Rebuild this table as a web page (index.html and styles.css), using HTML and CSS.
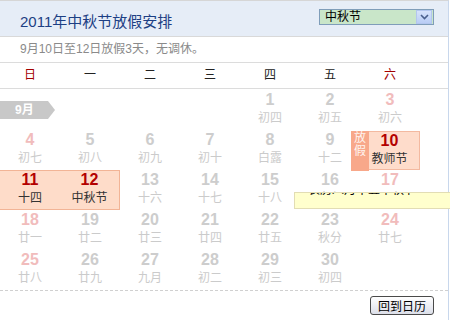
FILE: index.html
```html
<!DOCTYPE html>
<html lang="zh-CN">
<head>
<meta charset="utf-8">
<title>2011年中秋节放假安排</title>
<link rel="stylesheet" href="styles.css">
</head>
<body>
<div class="cal">
  <div class="hd">
    <h1 class="title">2011年中秋节放假安排</h1>
    <div class="select">
      <span class="sel-text">中秋节</span>
      <span class="sel-btn"><svg width="9" height="6" viewBox="0 0 9 6"><path d="M1 1 L4.5 4.5 L8 1" fill="none" stroke="#4a5f8c" stroke-width="1.6"/></svg></span>
    </div>
  </div>
  <div class="sub">9月10日至12日放假3天，无调休。</div>
  <div class="week">
    <span class="wk red">日</span><span class="wk">一</span><span class="wk">二</span><span class="wk">三</span><span class="wk">四</span><span class="wk">五</span><span class="wk red">六</span>
  </div>
  <div class="days">
    <div class="month-cell"><span class="month-tag">9月</span></div>
    <div class="cell"><span class="n">1</span><span class="l">初四</span></div>
    <div class="cell"><span class="n">2</span><span class="l">初五</span></div>
    <div class="cell we"><span class="n">3</span><span class="l">初六</span></div>

    <div class="cell we"><span class="n">4</span><span class="l">初七</span></div>
    <div class="cell"><span class="n">5</span><span class="l">初八</span></div>
    <div class="cell"><span class="n">6</span><span class="l">初九</span></div>
    <div class="cell"><span class="n">7</span><span class="l">初十</span></div>
    <div class="cell"><span class="n">8</span><span class="l">白露</span></div>
    <div class="cell"><span class="n">9</span><span class="l">十二</span></div>
    <div class="cell off"><span class="off-tag">放<br>假</span><span class="n">10</span><span class="l">教师节</span></div>

    <div class="fest">
      <div class="fcell"><span class="n">11</span><span class="l">十四</span></div>
      <div class="fcell"><span class="n">12</span><span class="l">中秋节</span></div>
    </div>
    <div class="cell"><span class="n">13</span><span class="l">十六</span></div>
    <div class="cell"><span class="n">14</span><span class="l">十七</span></div>
    <div class="cell"><span class="n">15</span><span class="l">十八</span></div>
    <div class="cell"><span class="n">16</span><span class="l">十九</span></div>
    <div class="cell we"><span class="n">17</span><span class="l">二十</span></div>

    <div class="cell we"><span class="n">18</span><span class="l">廿一</span></div>
    <div class="cell"><span class="n">19</span><span class="l">廿二</span></div>
    <div class="cell"><span class="n">20</span><span class="l">廿三</span></div>
    <div class="cell"><span class="n">21</span><span class="l">廿四</span></div>
    <div class="cell"><span class="n">22</span><span class="l">廿五</span></div>
    <div class="cell"><span class="n">23</span><span class="l">秋分</span></div>
    <div class="cell we"><span class="n">24</span><span class="l">廿七</span></div>

    <div class="cell we"><span class="n">25</span><span class="l">廿八</span></div>
    <div class="cell"><span class="n">26</span><span class="l">廿九</span></div>
    <div class="cell"><span class="n">27</span><span class="l">九月</span></div>
    <div class="cell"><span class="n">28</span><span class="l">初二</span></div>
    <div class="cell"><span class="n">29</span><span class="l">初三</span></div>
    <div class="cell"><span class="n">30</span><span class="l">初四</span></div>
  </div>
  <div class="ft"><button class="back">回到日历</button></div>
  <div class="tip"><span class="tip-text">农历八月十五中秋节</span></div>
</div>
</body>
</html>
```
FILE: styles.css
```css
* { box-sizing: border-box; }
html, body { margin: 0; padding: 0; background: #fff; overflow: hidden; }
body { font-family: "Liberation Sans", "Noto Sans CJK SC", sans-serif; font-size: 12px; color: #333; }

.cal {
  position: relative;
  width: 449px;
  height: 320px;
  border-top: 1px solid #d6d6d6;
  border-right: 1px solid #c8d7ec;
}

.hd {
  height: 36px;
  background: #e6edf7;
  border-bottom: 1px solid #d9d9d9;
  display: flex;
  justify-content: space-between;
  align-items: flex-start;
  padding-left: 20px;
}
.title {
  margin: 0;
  font-weight: normal;
  font-size: 15px;
  line-height: 18px;
  padding-top: 12px;
  color: #1d3f84;
}
.select {
  margin-top: 8px;
  margin-right: 14px;
  width: 115px;
  height: 16px;
  border: 1px solid #7f9db9;
  background: #c9e6c9;
  display: flex;
  align-items: center;
  justify-content: space-between;
}
.sel-text { font-size: 12px; line-height: 14px; color: #000; padding-left: 5px; }
.sel-btn {
  width: 16px;
  height: 14px;
  margin-right: 1px;
  background: linear-gradient(#d6e2fb, #b9cdf5);
  border: 1px solid #b3c6ee;
  display: flex;
  align-items: center;
  justify-content: center;
}
.sel-btn svg { display: block; }

.sub {
  height: 26px;
  border-bottom: 1px solid #dcdcdc;
  padding-left: 20px;
  line-height: 25px;
  color: #8a8a8a;
  font-size: 12px;
}

.week {
  height: 26px;
  border-bottom: 1px solid #dcdcdc;
  display: grid;
  grid-template-columns: repeat(7, 60px);
}
.wk { text-align: center; line-height: 25px; font-size: 12px; color: #222; }
.wk.red { color: #a30000; }

.days {
  margin-top: 1px;
  display: grid;
  grid-template-columns: repeat(7, 60px);
  grid-auto-rows: 40px;
}
.month-cell { grid-column: span 4; display: flex; align-items: center; }
.month-tag {
  width: 55px;
  height: 18px;
  background: #c8c8c8;
  color: #fff;
  font-weight: bold;
  font-size: 12px;
  line-height: 18px;
  padding-left: 15px;
  clip-path: polygon(0 0, 48px 0, 55px 9px, 48px 18px, 0 18px);
}

.cell, .fcell {
  display: flex;
  flex-direction: column;
  align-items: center;
  padding-top: 1px;
}
.n { font: bold 16px/18px "Liberation Sans", Arial, sans-serif; color: #cdcdcd; }
.l { font-size: 12px; line-height: 18px; color: #cbcbcb; }
.we .n { color: #f1bcbc; }

.off {
  position: relative;
  margin-top: 1px;
  padding-top: 0;
  background: #fedccb;
  border: 1px solid #f3b9a0;
  border-left: none;
}
.off .n { color: #b30000; }
.off .l { color: #333; }
.off-tag {
  position: absolute;
  left: -9px;
  top: -1px;
  bottom: -2px;
  width: 18px;
  background: #f8a88a;
  color: #fff4ef;
  font-size: 12px;
  line-height: 13px;
  text-align: center;
  padding-top: 1px;
}

.fest {
  grid-column: span 2;
  display: grid;
  grid-template-columns: 60px 59px;
  background: #fedcc9;
  border: 1px solid #f2b496;
  border-left: none;
  width: 120px;
}
.fcell { padding-top: 0; }
.fest .n { color: #b30000; }
.fest .l { color: #333; }

.ft {
  border-top: 1px dashed #d0d0d0;
  display: flex;
  justify-content: flex-end;
  padding-top: 5px;
  padding-right: 14px;
}
.back {
  width: 64px;
  height: 19px;
  padding: 0;
  border: 1px solid #4a4a4a;
  border-radius: 3px;
  background: linear-gradient(#ffffff, #dcdfe9);
  font-family: "Noto Sans CJK SC", sans-serif;
  font-size: 12px;
  line-height: 16px;
  color: #000;
}

.tip {
  position: absolute;
  left: 294px;
  top: 191px;
  width: 157px;
  height: 17px;
  overflow: hidden;
  background: #ffffcd;
  border: 1px solid #e2ddb4;
  border-right: none;
}
.tip-text {
  position: absolute;
  left: 13px;
  top: -9px;
  font-size: 12px;
  line-height: 12px;
  color: #000;
  white-space: nowrap;
}
```
